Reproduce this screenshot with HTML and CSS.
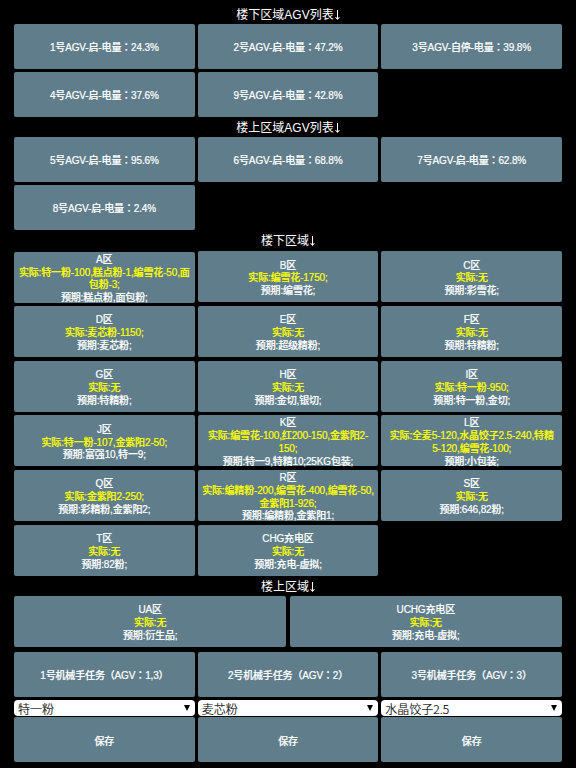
FILE: index.html
```html
<!DOCTYPE html>
<html lang="zh-CN">
<head>
<meta charset="utf-8">
<title>AGV</title>
<link rel="stylesheet" href="styles.css">
</head>
<body>
<main class="page">
  <h2 class="title">楼下区域AGV列表<svg class="down" viewBox="0 0 5 12"><path d="M2.5 1v9M.5 8l2 2.5 2-2.5"/></svg></h2>
  <section class="grid">
    <button class="btn">1号AGV-启-电量<span class="wide" lang="zh-TW">：</span>24.3%</button>
    <button class="btn">2号AGV-启-电量<span class="wide" lang="zh-TW">：</span>47.2%</button>
    <button class="btn">3号AGV-自停-电量<span class="wide" lang="zh-TW">：</span>39.8%</button>
    <button class="btn">4号AGV-启-电量<span class="wide" lang="zh-TW">：</span>37.6%</button>
    <button class="btn">9号AGV-启-电量<span class="wide" lang="zh-TW">：</span>42.8%</button>
  </section>
  <h2 class="title lowered">楼上区域AGV列表<svg class="down" viewBox="0 0 5 12"><path d="M2.5 1v9M.5 8l2 2.5 2-2.5"/></svg></h2>
  <section class="grid">
    <button class="btn">5号AGV-启-电量<span class="wide" lang="zh-TW">：</span>95.6%</button>
    <button class="btn">6号AGV-启-电量<span class="wide" lang="zh-TW">：</span>68.8%</button>
    <button class="btn">7号AGV-启-电量<span class="wide" lang="zh-TW">：</span>62.8%</button>
    <button class="btn">8号AGV-启-电量<span class="wide" lang="zh-TW">：</span>2.4%</button>
  </section>
  <h2 class="title zone-title">楼下区域<svg class="down" viewBox="0 0 5 12"><path d="M2.5 1v9M.5 8l2 2.5 2-2.5"/></svg></h2>
  <section class="grid zones">
    <button class="btn zone low">A区<span class="actual">实际:特一粉-100,糕点粉-1,编雪花-50,面<br>包粉-3;</span>预期:糕点粉,面包粉;</button>
    <button class="btn zone">B区<span class="actual">实际:编雪花-1750;</span>预期:编雪花;</button>
    <button class="btn zone">C区<span class="actual">实际:无</span>预期:彩雪花;</button>
    <button class="btn zone">D区<span class="actual">实际:麦芯粉-1150;</span>预期:麦芯粉;</button>
    <button class="btn zone">E区<span class="actual">实际:无</span>预期:超级精粉;</button>
    <button class="btn zone">F区<span class="actual">实际:无</span>预期:特精粉;</button>
    <button class="btn zone">G区<span class="actual">实际:无</span>预期:特精粉;</button>
    <button class="btn zone">H区<span class="actual">实际:无</span>预期:金切,银切;</button>
    <button class="btn zone">I区<span class="actual">实际:特一粉-950;</span>预期:特一粉,金切;</button>
    <button class="btn zone">J区<span class="actual">实际:特一粉-107,金紫阳2-50;</span>预期:富强10,特一9;</button>
    <button class="btn zone">K区<span class="actual">实际:编雪花-100,红200-150,金紫阳2-<br>150;</span>预期:特一9,特精10;25KG包装;</button>
    <button class="btn zone">L区<span class="actual">实际:全麦5-120,水晶饺子2.5-240,特精<br>5-120,编雪花-100;</span>预期:小包装;</button>
    <button class="btn zone">Q区<span class="actual">实际:金紫阳2-250;</span>预期:彩精粉,金紫阳2;</button>
    <button class="btn zone">R区<span class="actual">实际:编精粉-200,编雪花-400,编雪花-50,<br>金紫阳1-926;</span>预期:编精粉,金紫阳1;</button>
    <button class="btn zone">S区<span class="actual">实际:无</span>预期:646,82粉;</button>
    <button class="btn zone">T区<span class="actual">实际:无</span>预期:82粉;</button>
    <button class="btn zone">CHG充电区<span class="actual">实际:无</span>预期:充电-虚拟;</button>
  </section>
  <h2 class="title lowered">楼上区域<svg class="down" viewBox="0 0 5 12"><path d="M2.5 1v9M.5 8l2 2.5 2-2.5"/></svg></h2>
  <section class="grid zones pair">
    <button class="btn zone">UA区<span class="actual">实际:无</span>预期:衍生品;</button>
    <button class="btn zone">UCHG充电区<span class="actual">实际:无</span>预期:充电-虚拟;</button>
  </section>
  <section class="grid tasks">
    <button class="btn">1号机械手任务<span class="wide" lang="zh-TW">（</span>AGV<span class="wide" lang="zh-TW">：</span>1,3<span class="wide" lang="zh-TW">）</span></button>
    <button class="btn">2号机械手任务<span class="wide" lang="zh-TW">（</span>AGV<span class="wide" lang="zh-TW">：</span>2<span class="wide" lang="zh-TW">）</span></button>
    <button class="btn">3号机械手任务<span class="wide" lang="zh-TW">（</span>AGV<span class="wide" lang="zh-TW">：</span>3<span class="wide" lang="zh-TW">）</span></button>
  </section>
  <section class="grid choices">
    <div class="pick"><span>特一粉</span><svg class="caret" viewBox="0 0 6 6"><path d="M0 0h6L3 6z"/></svg></div>
    <div class="pick"><span>麦芯粉</span><svg class="caret" viewBox="0 0 6 6"><path d="M0 0h6L3 6z"/></svg></div>
    <div class="pick"><span>水晶饺子2.5</span><svg class="caret" viewBox="0 0 6 6"><path d="M0 0h6L3 6z"/></svg></div>
  </section>
  <section class="grid save">
    <button class="btn">保存</button>
    <button class="btn">保存</button>
    <button class="btn">保存</button>
  </section>
</main>
</body>
</html>
```
FILE: styles.css
```css
* { box-sizing: border-box; }
body {
  margin: 0;
  background: #000;
  color: #fff;
  font-family: "Liberation Sans", "Noto Sans CJK SC", sans-serif;
}
.page { padding: 5px 14px 0; height: 768px; overflow: hidden; }
.title {
  display: flex;
  justify-content: center;
  align-items: center;
  margin: 0;
  height: 20px;
  font-size: 12px;
  font-weight: 400;
  line-height: 20px;
}
.page > .title:first-child { height: 19px; }
.lowered { padding-top: 2px; }
.zone-title { height: 21px; }
.down { width: 5px; height: 12px; margin-left: 1px; fill: none; stroke: #fff; stroke-width: 1; }
.grid {
  display: grid;
  grid-template-columns: repeat(3, minmax(0, 1fr));
  grid-auto-rows: 45px;
  gap: 3.2px 3px;
}
.btn {
  display: block;
  width: 100%;
  height: 100%;
  margin: 0;
  padding: 4px 0 0;
  border: 0;
  border-radius: 2px;
  background: #607d8b;
  color: #fff;
  font: 500 10px/12.8px "Liberation Sans", "Noto Sans CJK SC", sans-serif;
  letter-spacing: -0.15px;
  text-align: center;
  white-space: nowrap;
  -webkit-text-stroke: 0.2px currentColor;
}
.wide { font-family: "Noto Sans CJK TC", sans-serif; line-height: 1; }
.zones { grid-auto-rows: 51px; gap: 3.7px 3.2px; }
.zone {
  display: flex;
  flex-direction: column;
  justify-content: center;
  align-items: center;
}
.zone.low { height: 51px; margin-top: 1px; padding-top: 3px; }
.actual { display: block; color: #ff0; }
.pair { grid-template-columns: repeat(2, minmax(0, 1fr)); }
.tasks { margin-top: 5px; }
.choices { grid-auto-rows: 16px; margin: 3px 0 1.5px; }
.pick {
  display: flex;
  justify-content: space-between;
  align-items: flex-start;
  padding: 0 5px 0 4px;
  border-radius: 4px;
  background: #fff;
  color: #000;
  font: 300 12px/18px "Noto Sans CJK SC", sans-serif;
  -webkit-text-stroke: 0.15px #000;
}
.caret { width: 6px; height: 6px; margin-top: 5px; }
.save .btn { padding-top: 5px; }
```
